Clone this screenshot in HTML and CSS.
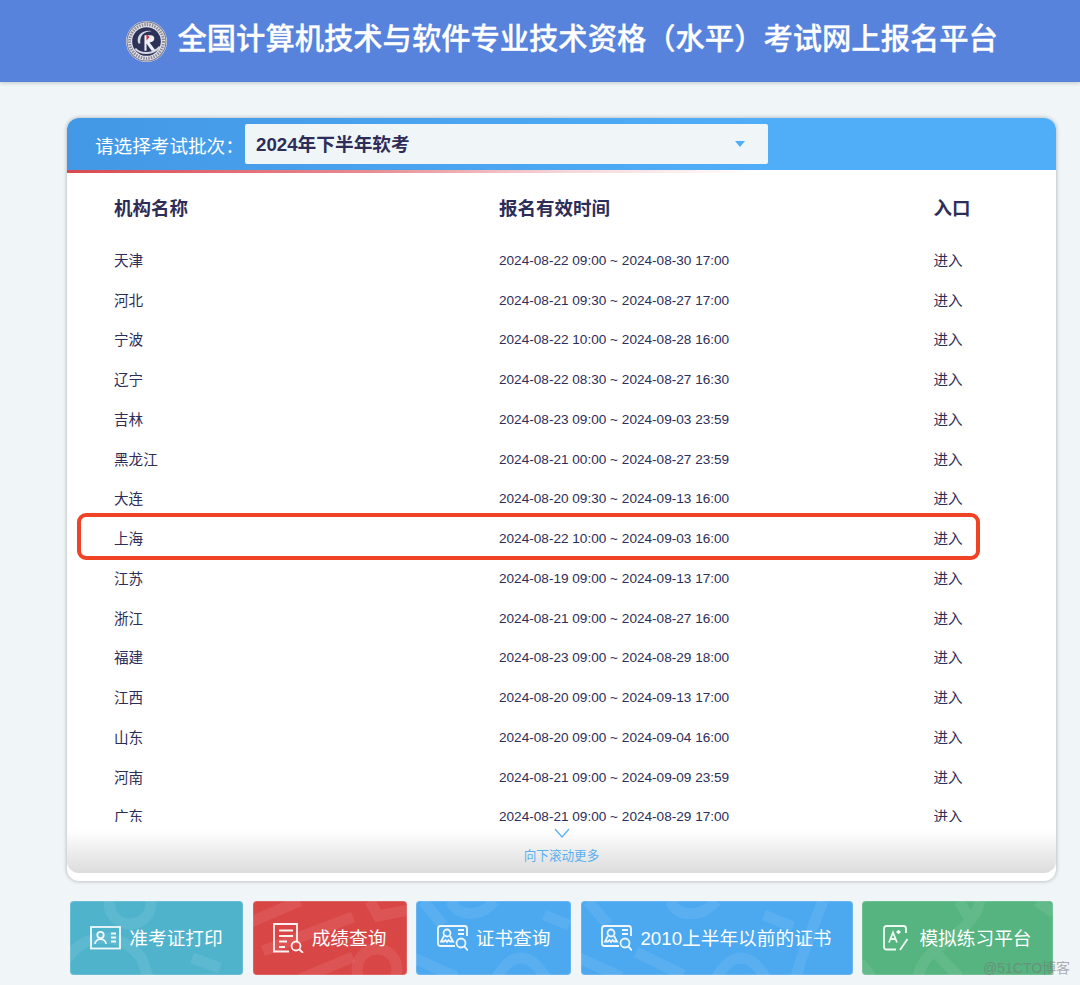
FILE: index.html
```html
<!DOCTYPE html>
<html lang="zh-CN">

<head>
    <meta charset="UTF-8">
    <title>全国计算机技术与软件专业技术资格（水平）考试网上报名平台</title>
    <link rel="stylesheet" href="styles.css">
</head>

<body>
    <header class="top-header">
        <svg class="logo" viewBox="0 0 40 40" width="41" height="41">
            <circle cx="20" cy="20" r="20" fill="#e8e8ec"/>
            <circle cx="20" cy="20" r="19" fill="none" stroke="#77788a" stroke-width="1"/>
            <circle cx="20" cy="20" r="16.5" fill="none" stroke="#8a8b9c" stroke-width="3" stroke-dasharray="1.5 1"/>
            <circle cx="20" cy="20" r="14" fill="#2c3258"/>
            <path d="M9 27 C14 33 27 33 33 25" fill="none" stroke="#d5d7e2" stroke-width="2"/>
            <path d="M12 22 C9 13 18 8 25 10 C18 10 13 14 14 22 Z" fill="#d5d7e2"/>
            <path d="M18 29 L18 14 L24 14 C29 14 29 21 23 21 L29 29 L25 29 L20 22 L20 29 Z" fill="#eef0f6"/>
            <path d="M20 13 L23 15.5 L20 19 Z" fill="#d8333a"/>
        </svg>
        <h1>全国计算机技术与软件专业技术资格（水平）考试网上报名平台</h1>
    </header>

    <main class="main-wrap">
        <section class="exam-card">
            <div class="batch-bar">
                <span class="batch-label">请选择考试批次：</span>
                <div class="batch-select">
                    <span>2024年下半年软考</span>
                    <i class="select-arrow"></i>
                </div>
            </div>
            <div class="red-line"></div>

            <div class="org-row org-head">
                <div>机构名称</div>
                <div>报名有效时间</div>
                <div>入口</div>
            </div>

            <div class="org-list">
                <div class="org-row"><div>天津</div><div class="time">2024-08-22 09:00 ~ 2024-08-30 17:00</div><div>进入</div></div>
                <div class="org-row"><div>河北</div><div class="time">2024-08-21 09:30 ~ 2024-08-27 17:00</div><div>进入</div></div>
                <div class="org-row"><div>宁波</div><div class="time">2024-08-22 10:00 ~ 2024-08-28 16:00</div><div>进入</div></div>
                <div class="org-row"><div>辽宁</div><div class="time">2024-08-22 08:30 ~ 2024-08-27 16:30</div><div>进入</div></div>
                <div class="org-row"><div>吉林</div><div class="time">2024-08-23 09:00 ~ 2024-09-03 23:59</div><div>进入</div></div>
                <div class="org-row"><div>黑龙江</div><div class="time">2024-08-21 00:00 ~ 2024-08-27 23:59</div><div>进入</div></div>
                <div class="org-row"><div>大连</div><div class="time">2024-08-20 09:30 ~ 2024-09-13 16:00</div><div>进入</div></div>
                <div class="org-row"><div>上海</div><div class="time">2024-08-22 10:00 ~ 2024-09-03 16:00</div><div>进入</div></div>
                <div class="org-row"><div>江苏</div><div class="time">2024-08-19 09:00 ~ 2024-09-13 17:00</div><div>进入</div></div>
                <div class="org-row"><div>浙江</div><div class="time">2024-08-21 09:00 ~ 2024-08-27 16:00</div><div>进入</div></div>
                <div class="org-row"><div>福建</div><div class="time">2024-08-23 09:00 ~ 2024-08-29 18:00</div><div>进入</div></div>
                <div class="org-row"><div>江西</div><div class="time">2024-08-20 09:00 ~ 2024-09-13 17:00</div><div>进入</div></div>
                <div class="org-row"><div>山东</div><div class="time">2024-08-20 09:00 ~ 2024-09-04 16:00</div><div>进入</div></div>
                <div class="org-row"><div>河南</div><div class="time">2024-08-21 09:00 ~ 2024-09-09 23:59</div><div>进入</div></div>
                <div class="org-row"><div>广东</div><div class="time">2024-08-21 09:00 ~ 2024-08-29 17:00</div><div>进入</div></div>
            </div>

            <div class="scroll-more">
                <svg viewBox="0 0 16 10" width="16" height="10"><path d="M1 1 L8 9 L15 1" fill="none" stroke="#5ab0f0" stroke-width="1.2"/></svg>
                <span>向下滚动更多</span>
            </div>

            <div class="highlight-box"></div>
        </section>

        <nav class="action-row">
            <a class="action-btn btn-print">
                <svg class="btn-bg" viewBox="0 0 173 74"><circle cx="60" cy="2" r="21"/><path d="M-3 58 C15 30 52 30 72 58 L78 76 M122 57 L150 67"/></svg>
                <svg class="btn-icon" viewBox="0 0 31 24" width="31" height="24"><rect x="1" y="1" width="29" height="21.5"/><circle cx="10.5" cy="9" r="3.200"/><path d="M5 18 C5.500 11.500 15.500 11.500 16 18 M21 7.500 H26 M21 11.500 H26 M21 15.500 H26"/></svg>
                <span>准考证打印</span>
            </a>
            <a class="action-btn btn-score">
                <svg class="btn-bg" viewBox="0 0 154 74"><path d="M-5 22 L47 0 M10 50 L100 16 M117 0 L125 15 L156 9 M47 78 L100 56"/><circle cx="124" cy="68" r="20"/></svg>
                <svg class="btn-icon" viewBox="0 0 31 30" width="31" height="30"><path d="M24 18 V1 H1 V28.500 H16 M6 7.500 H20 M6 13 H20 M6 18.500 H14 M6 24 H12"/><circle cx="23" cy="23" r="4.500"/><path d="M26.500 26.500 L30 30"/></svg>
                <span>成绩查询</span>
            </a>
            <a class="action-btn btn-cert">
                <svg class="btn-bg" viewBox="0 0 155 74"><path d="M35 0 C40 15 65 18 78 0 M7 0 L27 24 M128 14 L153 24 M80 78 C95 50 115 50 130 78 M-2 57 L40 76"/></svg>
                <svg class="btn-icon" viewBox="0 0 31 26" width="31" height="26"><path d="M18 21 H3.500 Q1 21 1 18.500 V3.500 Q1 1 3.500 1 H27.500 Q30 1 30 3.500 V11"/><circle cx="10" cy="8" r="3.500"/><path d="M7 11 L4 16.500 H7 L8.500 15 L10 17 L11.500 15 L13 16.500 H16 L13 11 M21 5 H27 M21 9 H27"/><circle cx="24" cy="18" r="4.500"/><path d="M27.300 21.300 L31 25.500"/></svg>
                <span>证书查询</span>
            </a>
            <a class="action-btn btn-old">
                <svg class="btn-bg" viewBox="0 0 272 74"><path d="M90 0 C95 16 120 18 135 0 M7 0 L27 24 M183 14 L212 26 M242 0 C232 25 222 50 215 76 M135 78 C150 50 170 50 185 78 M55 51 L102 74 M-2 57 L40 76"/></svg>
                <svg class="btn-icon" viewBox="0 0 31 26" width="31" height="26"><path d="M18 21 H3.500 Q1 21 1 18.500 V3.500 Q1 1 3.500 1 H27.500 Q30 1 30 3.500 V11"/><circle cx="10" cy="8" r="3.500"/><path d="M7 11 L4 16.500 H7 L8.500 15 L10 17 L11.500 15 L13 16.500 H16 L13 11 M21 5 H27 M21 9 H27"/><circle cx="24" cy="18" r="4.500"/><path d="M27.300 21.300 L31 25.500"/></svg>
                <span>2010上半年以前的证书</span>
            </a>
            <a class="action-btn btn-mock">
                <svg class="btn-bg" viewBox="0 0 191 74"><path d="M97 0 L110 22 M118 0 C112 25 90 35 72 50 L97 76 M72 50 C62 58 58 66 56 76 M-2 62 L10 76 M175 0 L192 12"/></svg>
                <svg class="btn-icon" viewBox="0 0 28 26" width="28" height="26"><path d="M13 24.500 H3.500 Q1 24.500 1 22 V3.500 Q1 1 3.500 1 H20.500 Q23 1 23 3.500 V8 M24.500 14 L17 25 M6 17.500 L10 7.500 L14 17.500 M7.500 14 H12.500 M13.500 7 H17.500 M15.500 5 V9"/></svg>
                <span>模拟练习平台</span>
            </a>
        </nav>
    </main>

    <div class="watermark">@51CTO博客</div>
</body>

</html>
```

FILE: styles.css
```css
* {
    box-sizing: border-box;
}

body {
    margin: 0;
    height: 985px;
    overflow: hidden;
    position: relative;
    background: #f0f5f8;
    font-family: "Liberation Sans", "Noto Sans CJK SC", sans-serif;
    color: #2d2d58;
}

.top-header {
    height: 82px;
    padding-left: 126px;
    display: flex;
    align-items: center;
    gap: 10.5px;
    background: #5783dc;
    box-shadow: 0 1px 4px rgba(0, 0, 0, 0.2);
}

.top-header h1 {
    margin: 0;
    padding-bottom: 11px;
    font-size: 29.3px;
    font-weight: 500;
    color: #fff;
    white-space: nowrap;
    -webkit-text-stroke: 0.3px #fff;
}

.logo {
    flex: none;
}

.main-wrap {
    padding: 36px 24px 0 67px;
}

.exam-card {
    position: relative;
    height: 763px;
    background: #fff;
    border-radius: 12px;
    box-shadow: 0 0 4px rgba(0, 0, 0, 0.3);
}

.batch-bar {
    height: 52px;
    padding-left: 28px;
    display: flex;
    align-items: center;
    background: linear-gradient(to right, #4398e5, #50aef8 70%);
    border-radius: 12px 12px 0 0;
}

.batch-label {
    width: 150px;
    font-size: 18.6px;
    color: #fff;
    white-space: nowrap;
}

.batch-select {
    width: 523px;
    height: 40px;
    padding: 0 23px 3px 11px;
    display: flex;
    align-items: center;
    justify-content: space-between;
    background: #f0f5f8;
    border-radius: 2px;
    font-size: 18.7px;
    font-weight: 700;
}

.select-arrow {
    width: 0;
    height: 0;
    margin-top: 3px;
    border-left: 5.5px solid transparent;
    border-right: 5.5px solid transparent;
    border-top: 6px solid #50aef8;
}

.red-line {
    height: 3px;
    background: linear-gradient(to right, #d94a50, #e88a90 30%, #f5d5d8 50%, #fff 70%);
}

.org-row {
    display: grid;
    grid-template-columns: 385px 434.5px auto;
    align-items: center;
    height: 39.75px;
    padding-left: 47px;
    font-size: 14.6px;
}

.org-head {
    height: 66.5px;
    padding-top: 2px;
    font-size: 18.5px;
    font-weight: 700;
}

.org-list {
    height: 588px;
    overflow: hidden;
}

.time {
    padding-top: 2px;
    font-size: 13.6px;
}

.scroll-more {
    position: absolute;
    left: 0;
    right: 0;
    bottom: 8px;
    height: 51px;
    padding-top: 6px;
    display: flex;
    flex-direction: column;
    align-items: center;
    gap: 7px;
    font-size: 12.6px;
    color: #5ab0f0;
    background: linear-gradient(to bottom, #fff 15%, #dcdcdc);
    border-radius: 0 0 12px 12px;
}

.highlight-box {
    position: absolute;
    left: 10px;
    top: 395px;
    width: 903px;
    height: 47px;
    border: 4px solid #f04326;
    border-radius: 9px;
}

.action-row {
    display: flex;
    gap: 9.5px;
    margin: 20px 0 0 3px;
}

.action-btn {
    position: relative;
    height: 74px;
    display: flex;
    align-items: center;
    justify-content: center;
    gap: 8px;
    overflow: hidden;
    border-radius: 4px;
    font-size: 18.7px;
    color: #fff;
    box-shadow: inset 0 0 0 1px rgba(255, 255, 255, 0.15);
}

.btn-print { width: 173px; background: #50b3cc; }
.btn-score { width: 154px; background: #d94646; }
.btn-cert { width: 155px; background: #4ca9f0; }
.btn-old { width: 272px; background: #4ca9f0; }
.btn-mock { width: 191px; background: #55b47f; }

.btn-bg {
    position: absolute;
    inset: 0;
    width: 100%;
    height: 100%;
    fill: none;
    stroke: rgba(255, 255, 255, 0.08);
    stroke-width: 11;
}

.btn-icon {
    position: relative;
    flex: none;
    fill: none;
    stroke: #fff;
    stroke-width: 1.8;
    opacity: 0.92;
}

.action-btn span {
    position: relative;
    padding-bottom: 4px;
}

.watermark {
    position: absolute;
    left: 983px;
    top: 957px;
    font-size: 14px;
    color: rgba(120, 120, 120, 0.6);
}
```
